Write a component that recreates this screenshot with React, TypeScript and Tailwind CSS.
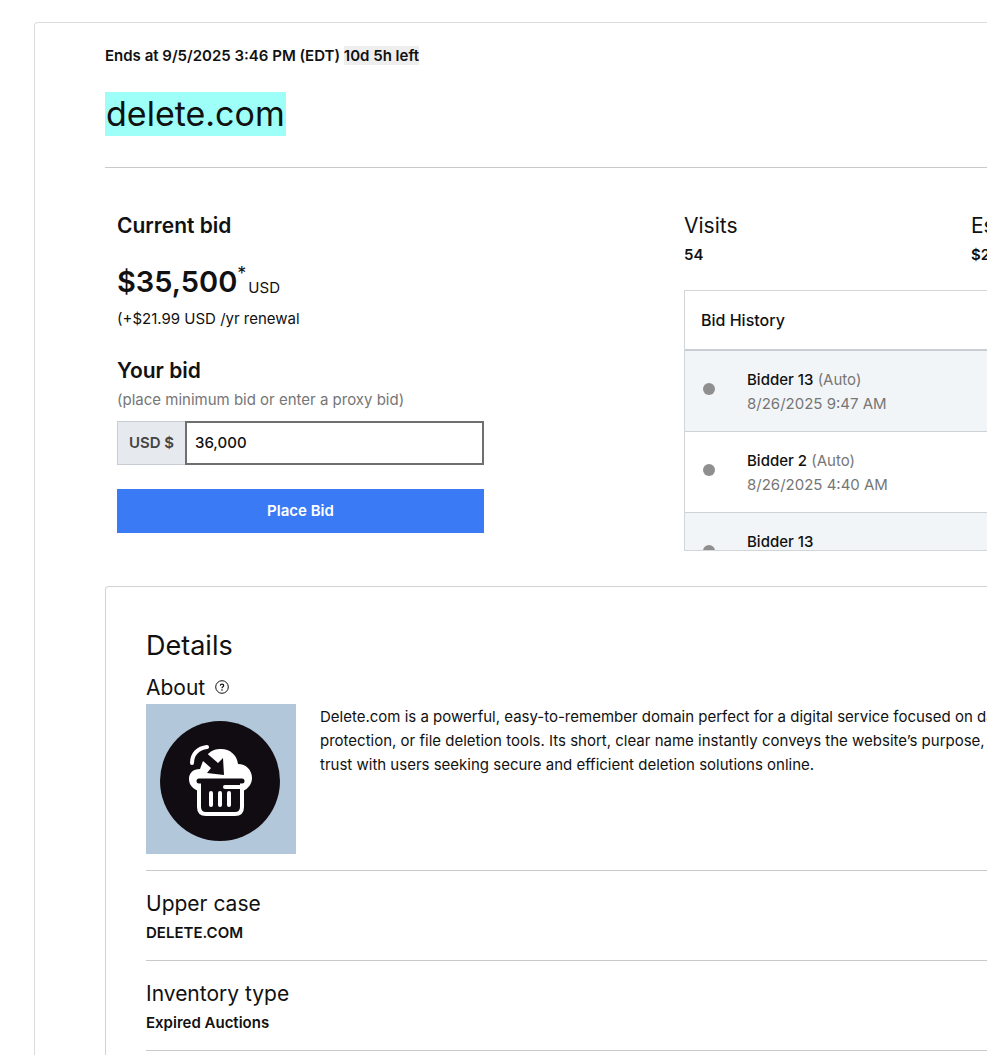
const bids = [
  { bidder: "Bidder 13", auto: true, date: "8/26/2025 9:47 AM" },
  { bidder: "Bidder 2", auto: true, date: "8/26/2025 4:40 AM" },
  { bidder: "Bidder 13", auto: false, date: "8/26/2025 4:40 AM" },
];

const facts = [
  { label: "Upper case", value: "DELETE.COM" },
  { label: "Inventory type", value: "Expired Auctions" },
];

function DomainLogo() {
  return (
    <svg viewBox="0 0 150 150" className="size-[150px] shrink-0" role="img" aria-label="delete.com logo">
      <rect width="150" height="150" fill="#b2c8da" />
      <circle cx="74" cy="77" r="60" fill="#110c11" />
      {/* Cloud */}
      <path
        d="M62 50 C66 46 70 45 75 45 C84 45 91 51 92 60 C100 60 106 66 106 74 C106 80 102 85 97 87 H53 C47 85 43 81 43 75 C43 69 47 65 54 65 L57 57 Z"
        fill="#fff"
      />
      {/* Basket */}
      <path d="M53 79 H96 V103 Q96 110 89 110 H60 Q53 110 53 103 Z" fill="#110c11" stroke="#fff" strokeWidth="4" />
      <path d="M55 77 H94 V81 H55 Z" fill="#110c11" />
      <path d="M79 83 H96" stroke="#fff" strokeWidth="4" strokeLinecap="round" />
      <path d="M53 77 H96" stroke="#110c11" strokeWidth="5" strokeLinecap="round" />
      <path d="M65 89 V101 M74 89 V101 M83 89 V101" stroke="#fff" strokeWidth="4" strokeLinecap="round" />
      {/* Arrow */}
      <path d="M52 53 L57 46 L72 59 L77 54 L78 71 L61 69 L65 64 L57 57 Z" fill="#110c11" />
      <path d="M46 59 C46 50 52 44 61 43" fill="none" stroke="#fff" strokeWidth="4" strokeLinecap="round" />
    </svg>
  );
}

function BidForm() {
  return (
    <form className="w-[367px]" onSubmit={(e) => e.preventDefault()}>
      <h2 className="text-[21px] leading-7 font-semibold">Current bid</h2>
      <p className="mt-[18px] flex h-12 items-center">
        <span className="text-[29px] font-semibold">$35,500</span>
        <span className="mb-4 text-lg">*</span>
        <span className="mt-3 ml-0.5 text-[15px]">USD</span>
      </p>
      <p className="mt-px text-[15px] leading-6">(+$21.99 USD /yr renewal</p>
      <label htmlFor="bid" className="mt-[26px] block text-[21px] leading-7 font-semibold">
        Your bid
      </label>
      <p className="mt-[3px] text-[15px] leading-6 text-[#767676]">(place minimum bid or enter a proxy bid)</p>
      <div className="mt-[9px] flex h-11">
        <span className="flex w-[68px] items-center justify-center border border-r-0 border-[#c8cdd4] bg-[#e6e9ee] text-[15px] font-semibold text-[#444]">
          USD $
        </span>
        <input
          id="bid"
          defaultValue="36,000"
          className="min-w-0 flex-1 border-2 border-[#6f6f6f] px-2 text-[15px] font-medium outline-none"
        />
      </div>
      <button type="submit" className="mt-6 h-11 w-full bg-[#3a7af5] text-[15px] font-semibold text-white">
        Place Bid
      </button>
    </form>
  );
}

function BidHistory() {
  return (
    <div className="mt-[23px] h-[261px] overflow-hidden border border-[#d3d6d9]">
      <h3 className="border-b-2 border-[#c9ced4] px-4 py-[15px] text-base leading-7 font-medium">
        Bid History
      </h3>
      <ul>
        {bids.map((bid, i) => (
          <li
            key={i}
            className="flex items-center border-b border-[#cdd2d6] px-[18px] pt-[17px] pb-[15px] text-[15px] leading-6 odd:bg-[#f2f5f7]"
          >
            <span className="mb-1.5 size-3 rounded-full bg-[#8f8f8f]" />
            <div className="ml-8 text-[#767676]">
              <p>
                <span className="font-medium text-[#111]">{bid.bidder}</span> {bid.auto && "(Auto)"}
              </p>
              <p>{bid.date}</p>
            </div>
          </li>
        ))}
      </ul>
    </div>
  );
}

export default function App() {
  return (
    <div className="overflow-x-hidden bg-white font-['Inter',sans-serif] text-[#111]">
      <main className="mx-[34px] mt-[22px] min-w-[1276px] rounded-t border border-b-0 border-[#dcdcdc] px-[70px] pt-[21px]">
        <p className="text-[15px] leading-6 font-semibold">
          Ends at 9/5/2025 3:46 PM (EDT) <span className="bg-[#eee]">10d 5h left</span>
        </p>
        <h1 className="mt-6 flex text-[34px] leading-[44px]">
          <mark className="bg-[#9dfff8] px-px text-[#111]">delete.com</mark>
        </h1>
        <hr className="mt-[31px] border-[#c9c9c9]" />

        <section className="mt-11 grid grid-cols-2">
          <div className="px-3">
            <BidForm />
          </div>
          <div className="px-3">
            <dl className="flex">
              <div className="w-[287px]">
                <dt className="text-[21px] leading-7">Visits</dt>
                <dd className="mt-[3px] text-[15px] leading-6 font-semibold">54</dd>
              </div>
              <div>
                <dt className="text-[21px] leading-7">Estimated value</dt>
                <dd className="mt-[3px] text-[15px] leading-6 font-semibold">$25,000</dd>
              </div>
            </dl>
            <BidHistory />
          </div>
        </section>

        <section className="mt-[35px] rounded-t border border-b-0 border-[#d3d3d3] px-10 pt-[41px] pb-1">
          <h2 className="text-[27px] leading-9">Details</h2>
          <h3 className="mt-[10px] flex items-center text-[21px] leading-7">
            About
            <button type="button" aria-label="About this description" className="mb-0.5 ml-[10px]">
              <svg viewBox="0 0 14 14" className="size-[14px]" fill="none" stroke="currentColor">
                <circle cx="7" cy="7" r="6.300" />
                <path d="M5.300 5.600 C5.400 3.600 8.700 3.600 8.700 5.600 C8.700 6.900 7 6.700 7 8.200" strokeWidth="1.200" />
                <circle cx="7" cy="10" r=".8" fill="currentColor" stroke="none" />
              </svg>
            </button>
          </h3>
          <div className="mt-0.5 flex gap-6 pb-4">
            <DomainLogo />
            <p className="pt-px text-[15px] leading-6 whitespace-nowrap">
              Delete.com is a powerful, easy-to-remember domain perfect for a digital service focused on data
              <br />
              protection, or file deletion tools. Its short, clear name instantly conveys the website’s purpose, building
              <br />
              trust with users seeking secure and efficient deletion solutions online.
            </p>
          </div>
          <dl>
            {facts.map((fact) => (
              <div key={fact.label} className="border-t border-[#c9c9c9] pt-[19px] pb-[15px]">
                <dt className="text-[21px] leading-7">{fact.label}</dt>
                <dd className="mt-[3px] text-[15px] leading-6 font-semibold">{fact.value}</dd>
              </div>
            ))}
          </dl>
          <hr className="border-[#c9c9c9]" />
        </section>
      </main>
    </div>
  );
}
